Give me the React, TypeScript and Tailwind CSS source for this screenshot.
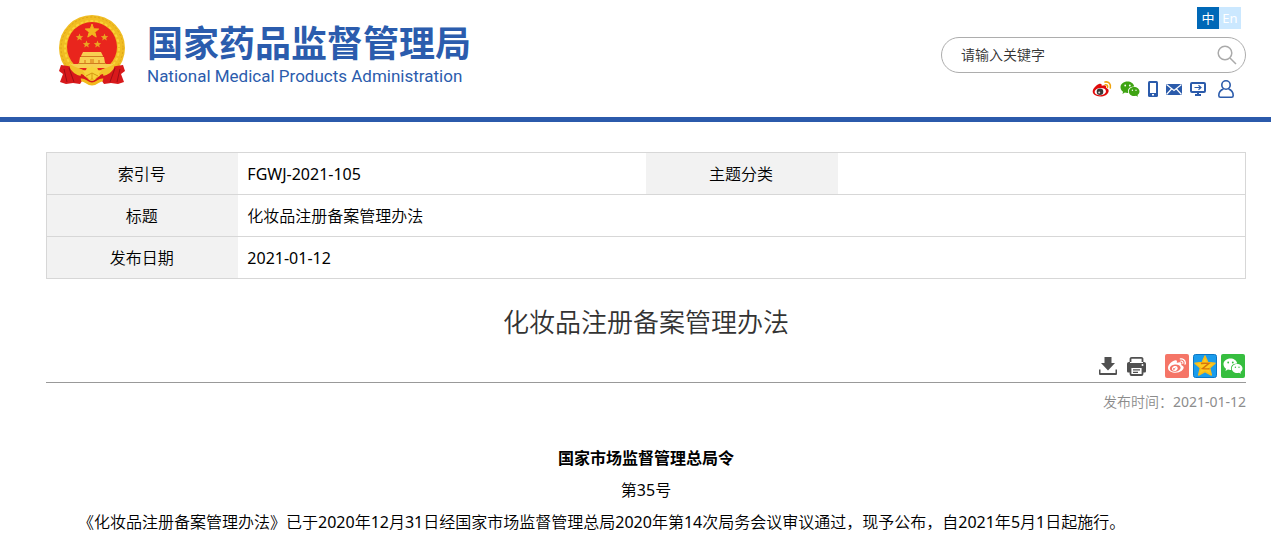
import type { ReactNode } from 'react';
import { FaWeibo } from 'react-icons/fa';

// Latin runs need the regular cut, the light one is too faint next to the Chinese text
function MixedText({ text }: { text: string }) {
  return text
    .split(/([\w-]+)/)
    .map((part, i) =>
      i % 2 === 1 ? (
        <span key={i} className="font-normal">
          {part}
        </span>
      ) : (
        part
      ),
    );
}

function Emblem() {
  return (
    <svg className="h-[72px] w-[68px] shrink-0" viewBox="0 0 68 72" aria-hidden="true">
      <circle cx="34" cy="34" r="33" fill="#f0bd22" />
      <circle cx="34" cy="34" r="31" fill="none" stroke="#dfa31a" strokeWidth="1" strokeDasharray="2 2" />
      <circle cx="34" cy="34" r="27" fill="none" stroke="#fbd338" strokeWidth="2" strokeDasharray="3 2" />
      <circle cx="34" cy="33" r="25" fill="#e9251d" />
      <path d="M34 10l1.700 4.800 5 .2-3.900 3.200 1.400 4.900-4.200-2.800-4.200 2.800 1.400-4.900-3.900-3.200 5-.2z" fill="#f3b41d" stroke="#f3b41d" strokeWidth="1" />
      <g fill="#eaa522">
        <path id="small-star" d="M21.500 19.500l1 2.600 2.700.1-2.100 1.700.7 2.700-2.300-1.500-2.300 1.500.7-2.700-2.100-1.700 2.700-.1z" />
        <use href="#small-star" x="25" />
        <use href="#small-star" x="7" y="7" />
        <use href="#small-star" x="18" y="7" />
      </g>
      <path d="M25 38h18l2 4H23zM22 43h24l1 6H21zM13 50h42v4H13z" fill="#f8cf52" />
      <path d="M23 42.500h22M20 49.500h28" stroke="#d07c20" strokeWidth="1" />
      <path d="M32 45h4v4h-4zM26 46h2v3h-2zM40 46h2v3h-2z" fill="#e8a030" />
      <path d="M3 51l7 1 12 4 4 8-4 6-7-1-7 1-6-2 3-8-4-3zM65 51l-7 1-12 4-4 8 4 6 7-1 7 1 6-2-3-8 4-3z" fill="#d8191b" />
      <path d="M11 54l5 14M57 54l-5 14M6 55l3 13M62 55l-3 13" stroke="#9f0d15" strokeWidth="1" />
      <path d="M12 50c8 5 14 5 16 8l-5 4c-5-1-9-4-11-8zM56 50c-8 5-14 5-16 8l5 4c5-1 9-4 11-8z" fill="#f2c22a" />
      <path d="M23 60c5 1 7 7 11 7s6-6 11-7l1 4c-4 1-7 7-12 7s-8-6-12-7z" fill="#d8191b" />
      <path d="M25 57l3-1 1-3 3 1 2-2 2 2 3-1 1 3 3 1-2 3 1 2-4 1-1 3-3-2-3 2-1-3-4-1 1-2z" fill="#f8d23c" />
      <path d="M28 62l6-3 6 3M34 59v6" fill="none" stroke="#d59612" strokeWidth="1" />
      <path d="M23 66c4-1 6 4 11 4s7-5 11-4" fill="none" stroke="#f2b91c" strokeWidth="3" />
    </svg>
  );
}

function WeiboColor() {
  return (
    <svg className="h-[18px] w-5" viewBox="0 0 20 18">
      <path d="M7 4c2-.9 3 .2 2.700 1.800 3-1.200 5.100-.5 4.300 2 2 .7 3 2 2.600 3.600C16 14.500 12 16.500 8 16.400 4 16.300.7 14.500.7 11.500.7 8.800 4 5.200 7 4z" fill="#df0a0a" />
      <ellipse cx="8.300" cy="11.600" rx="5.700" ry="3.600" fill="#fff" transform="rotate(-7 8.300 11.600)" />
      <circle cx="8" cy="11.700" r="3.300" fill="#383838" />
      <circle cx="7.200" cy="12.400" r="1" fill="#ddd" />
      <path d="M13.300 4.800c1.700-.3 2.700.9 2.200 2.500M13 2c3.800-.7 6.200 2 5.300 6" fill="none" stroke="#f0a30c" strokeWidth="1.600" strokeLinecap="round" />
    </svg>
  );
}

function WechatMark({ className, eye }: { className: string; eye: string }) {
  return (
    <svg className={className} viewBox="0 0 20 18" fill="currentColor">
      <path d="M7.500 1.500C3.500 1.500.5 4 .5 7.200c0 1.900 1 3.500 2.600 4.500l-.7 2.200 2.500-1.300c.8.200 1.600.3 2.600.3h.7C7.200 9.300 9.700 6.500 13.900 6.500h.4C13.700 3.500 10.900 1.500 7.500 1.500z" />
      <path d="M19.500 11.500c0-2.500-2.500-4.500-5.400-4.500s-5.300 2-5.300 4.500S11.200 16 14.100 16c.7 0 1.300-.1 1.900-.3l2 1.100-.5-1.800c1.200-.8 2-2.100 2-3.500z" />
      <g fill={eye}>
        <circle cx="5.200" cy="5.500" r=".9" />
        <circle cx="9.800" cy="5.500" r=".9" />
        <circle cx="12.400" cy="10.200" r=".7" />
        <circle cx="16" cy="10.200" r=".7" />
      </g>
    </svg>
  );
}

function IconLink({ label, children }: { label: string; children: ReactNode }) {
  return (
    <a href="#" aria-label={label} className="block shrink-0">
      {children}
    </a>
  );
}

function QuickLinks() {
  return (
    <nav className="flex h-5 items-center justify-end gap-2 pr-3 text-[#2b5bab]">
      <IconLink label="微博">
        <WeiboColor />
      </IconLink>
      <IconLink label="微信">
        <WechatMark className="h-[18px] w-5 text-[#3fa413]" eye="#fff" />
      </IconLink>
      <IconLink label="手机版">
        <svg className="h-4 w-[10px]" viewBox="0 0 10 16">
          <rect width="10" height="16" rx="1.500" fill="currentColor" />
          <path d="M2 2h6v10H2zM4 13h2v1.500H4z" fill="#fff" />
        </svg>
      </IconLink>
      <IconLink label="邮箱">
        <svg className="h-[11px] w-4" viewBox="0 0 16 11">
          <path d="M0 0h16v11H0z" fill="currentColor" />
          <path d="M.5.500L8 6.500 15.500.500M.5 10.500L5.500 5M15.500 10.500L10.500 5" fill="none" stroke="#fff" strokeWidth="1.200" />
        </svg>
      </IconLink>
      <IconLink label="电脑版">
        <svg className="h-[14px] w-4" viewBox="0 0 16 14" fill="none" stroke="currentColor">
          <rect x="1" y="1" width="14" height="9" rx="1" strokeWidth="2" />
          <path d="M5 13h6M8 10v3" strokeWidth="2" />
          <path d="M4.500 5.500h6.500M8.500 3.200L11 5.500 8.500 7.800" strokeWidth="1.200" />
        </svg>
      </IconLink>
      <IconLink label="个人中心">
        <svg className="ml-1 h-[18px] w-4" viewBox="0 0 16 18" fill="none" stroke="currentColor" strokeWidth="1.600">
          <circle cx="8" cy="5" r="4.200" />
          <path d="M5.500 9C2.500 10 .8 12.500.8 15.500c0 1 .6 1.700 1.600 1.700h11.200c1 0 1.600-.7 1.600-1.700 0-3-1.700-5.500-4.700-6.500" />
        </svg>
      </IconLink>
    </nav>
  );
}

function Header() {
  return (
    <header className="flex h-[122px] justify-between border-b-[5px] border-[#2b5aab] pr-[25px] pl-[58px]">
      <a href="#" className="mt-[14px] flex h-[72px] items-start gap-[21px] text-[#2b5cad]">
        <Emblem />
        <span className="mt-[9px] flex flex-col">
          <span className="text-[36px] leading-[42px] font-bold whitespace-nowrap">国家药品监督管理局</span>
          <span className="font-[Roboto] text-[17px] leading-[22px] font-normal whitespace-nowrap">
            National Medical Products Administration
          </span>
        </span>
      </a>
      <div className="w-[305px] pt-[7px]">
        <div className="flex justify-end pr-[5px] text-[13px] leading-[22px] font-normal text-white">
          <button type="button" className="h-[22px] w-[22px] bg-[#0068b7]">
            中
          </button>
          <button type="button" className="h-[22px] w-[22px] bg-[#cbe8ff]">
            En
          </button>
        </div>
        <form className="mt-2 flex h-9 items-center rounded-full border border-[#adadad] pr-2 pl-[19px]">
          <input
            type="text"
            aria-label="请输入关键字"
            placeholder="请输入关键字"
            className="min-w-0 flex-1 text-sm text-[#333] outline-none placeholder:text-[#333]"
          />
          <button type="submit" aria-label="搜索">
            <svg className="h-5 w-5" viewBox="0 0 20 20" fill="none" stroke="#aaa" strokeWidth="1.500">
              <circle cx="8" cy="8" r="6.800" />
              <path d="M13 13l6 6" />
            </svg>
          </button>
        </form>
        <div className="mt-[6px]">
          <QuickLinks />
        </div>
      </div>
    </header>
  );
}

function InfoTable() {
  const th = 'bg-[#f2f2f2] pr-[2px] font-[350]';
  const td = 'px-[9px]';
  return (
    <table className="w-full table-fixed border-collapse border border-[#d7d7d7] text-base text-black">
      <colgroup>
        <col className="w-[16%]" />
        <col className="w-[34%]" />
        <col className="w-[16%]" />
        <col className="w-[34%]" />
      </colgroup>
      <tbody>
        <tr className="h-[42px] border-b border-[#d7d7d7]">
          <th scope="row" className={th}>索引号</th>
          <td className={td}>
            <MixedText text="FGWJ-2021-105" />
          </td>
          <th scope="row" className={th}>主题分类</th>
          <td className={td} />
        </tr>
        <tr className="h-[42px] border-b border-[#d7d7d7]">
          <th scope="row" className={th}>标题</th>
          <td className={td} colSpan={3}>化妆品注册备案管理办法</td>
        </tr>
        <tr className="h-[42px]">
          <th scope="row" className={th}>发布日期</th>
          <td className={td} colSpan={3}>
            <MixedText text="2021-01-12" />
          </td>
        </tr>
      </tbody>
    </table>
  );
}

function ArticleTools() {
  return (
    <div className="flex h-[29px] items-start justify-end gap-1 border-b border-[#999] pr-px">
      <button type="button" aria-label="下载" className="mt-[3px] mr-[6px]">
        <svg className="h-[18px] w-[18px]" viewBox="0 0 18 18" fill="#505050">
          <path d="M5.500 0h7v6h3.500l-7 7.500L2 6h3.500z" />
          <path d="M0 12.500h1.500V16h15v-3.500H18v4c0 1-.5 1.500-1.500 1.500h-15C.5 18 0 17.500 0 16.500z" />
        </svg>
      </button>
      <button type="button" aria-label="打印" className="mt-[3px] mr-[15px]">
        <svg className="h-[19px] w-[19px]" viewBox="0 0 19 19">
          <path d="M3.500 5V1.500C3.500.9 4 .9 4.700.9h9.600c.8 0 1.200 0 1.200.6V5" fill="#fff" stroke="#505050" strokeWidth="1.800" />
          <path d="M2 5h15c1.200 0 2 .8 2 2v7c0 1-.6 1.500-1.500 1.500H1.500C.6 15.500 0 15 0 14V7c0-1.200.8-2 2-2z" fill="#505050" />
          <path d="M3 5.500h13" stroke="#fff" strokeWidth="1" />
          <rect x="3.500" y="10" width="12" height="8" rx="1" fill="#fff" stroke="#505050" strokeWidth="1.800" />
          <path d="M6 12.800h7M6 15.300h5" stroke="#505050" strokeWidth="1.300" />
          <circle cx="15.500" cy="8" r="1" fill="#fff" />
        </svg>
      </button>
      <a href="#" aria-label="分享到微博" className="flex h-6 w-6 items-center justify-center rounded-xs bg-[#f57567] text-white">
        <FaWeibo size={18} />
      </a>
      <a href="#" aria-label="分享到QQ空间" className="block h-6 w-6">
        <svg className="h-6 w-6" viewBox="0 0 24 24">
          <rect x=".5" y=".5" width="23" height="23" rx="2" fill="#1a9cec" stroke="#0b76c4" />
          <path d="M12 2l2.800 6.600 7.200.7-5.400 4.700 1.700 7L12 17.500 5.700 21l1.700-7L2 9.300l7.200-.7z" fill="#fecb1f" stroke="#f8bc1a" strokeWidth="1.500" strokeLinejoin="round" />
          <path d="M8 9.500c3-.4 5-.3 8-.1l-6.500 5.200c2.500.4 4.500.4 7 .1" fill="none" stroke="#d8740b" strokeWidth="1.400" />
        </svg>
      </a>
      <a href="#" aria-label="分享到微信" className="flex h-6 w-6 items-center justify-center rounded-xs bg-[#36be3f] text-white">
        <WechatMark className="h-[18px] w-5" eye="#36be3f" />
      </a>
    </div>
  );
}

export default function App() {
  return (
    <div lang="zh-CN" className="min-h-screen bg-white font-['Noto_Sans','Noto_Sans_CJK_SC',sans-serif] font-[350] text-black">
      <Header />
      <main className="pt-[30px] pr-[25px] pb-6 pl-[46px]">
        <InfoTable />
        <h1 className="mt-[23px] text-center text-[26px] leading-10 font-[350] text-[#333]">化妆品注册备案管理办法</h1>
        <div className="mt-3">
          <ArticleTools />
        </div>
        <p className="mt-[7px] text-right text-sm leading-6 text-[#8c8c8c]">
          <MixedText text={'发布时间\uff1a2021-01-12'} />
        </p>
        <article className="mt-7 text-base leading-8">
          <p className="text-center font-bold">国家市场监督管理总局令</p>
          <p className="text-center">
            <MixedText text="第35号" />
          </p>
          <p className="indent-8">
            <MixedText
              text={
                '《化妆品注册备案管理办法》已于2020年12月31日经国家市场监督管理总局2020年第14次局务会议审议通过\uff0c现予公布\uff0c自2021年5月1日起施行。'
              }
            />
          </p>
        </article>
      </main>
    </div>
  );
}
